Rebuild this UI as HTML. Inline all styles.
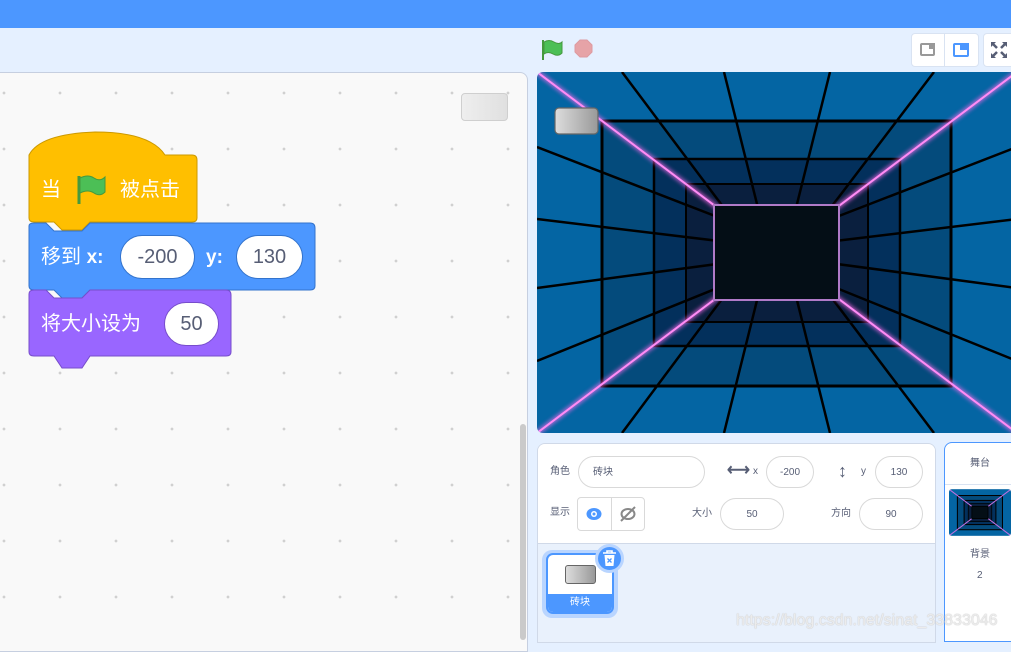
<!DOCTYPE html>
<html><head><meta charset="utf-8">
<style>
*{margin:0;padding:0;box-sizing:border-box}
body{width:1011px;height:640px;overflow:hidden;background:#e5f0ff;font-family:"Liberation Sans","Noto Sans CJK SC",sans-serif;position:relative}
.abs{position:absolute}
.top{left:0;top:0;width:1011px;height:28px;background:#4c97ff}
.code{left:-10px;top:72px;width:538px;height:580px;background-color:#f9f9f9;border:1px solid #c6cfe0;border-radius:0 8px 0 0;
background-image:radial-gradient(circle,#d0d0d0 1.2px,transparent 1.6px);background-size:56px 56px;background-position:-15px -8px}
.blk{color:#fff;font-size:20px;line-height:24px}
.pill{position:absolute;background:#fff;border-radius:22px;color:#575e75;font-size:20px;text-align:center;border:1px solid #3373cc}
.lab{font-size:10px;color:#575e75;position:absolute;line-height:10px}
.inp{position:absolute;border:1px solid #d9d9d9;border-radius:16px;background:#fff;font-size:10px;color:#575e75;text-align:center;line-height:12px;height:32px;padding-top:10px}
</style></head><body>
<div class="abs top"></div>
<div class="abs code"></div>
<div class="abs" style="left:520px;top:424px;width:6px;height:216px;background:#cacaca;border-radius:3px"></div>
<div class="abs" style="left:461px;top:93px;width:47px;height:28px;border:1px solid #cfcfcf;border-radius:4px;background:linear-gradient(90deg,#eee,#e0e0e0)"></div>

<!-- blocks -->
<svg class="abs" style="left:0;top:120px" width="330" height="260">
<path d="M29 35 Q40 14 95 12 Q150 12 165 35 L192 35 Q197 35 197 40 L197 98 Q197 102 192 102 L90 102 L82 110 L62 110 L54 102 L34 102 Q29 102 29 98 Z" fill="#ffbf00" stroke="#cc9900"/>
<path d="M29 106 Q29 103 34 103 L46 103 L54 111 L82 111 L90 103 L310 103 Q315 103 315 108 L315 166 Q315 170 310 170 L90 170 L82 178 L62 178 L54 170 L34 170 Q29 170 29 166 Z" fill="#4c97ff" stroke="#3373cc"/>
<path d="M29 174 Q29 170 34 170 L46 170 L54 178 L82 178 L90 170 L226 170 Q231 170 231 175 L231 232 Q231 236 226 236 L90 236 L82 248 L62 248 L54 236 L34 236 Q29 236 29 232 Z" fill="#9966ff" stroke="#774dcb"/>
<path d="M79 56 L79 84" stroke="#45993d" stroke-width="3"/>
<path d="M80 58 Q88 54 94 58 Q100 62 105 57 L105 72 Q100 77 94 73 Q88 69 80 73 Z" fill="#4cbf56" stroke="#45993d"/>
</svg>
<div class="abs blk" style="left:41px;top:178px">当</div>
<div class="abs blk" style="left:120px;top:178px">被点击</div>
<div class="abs blk" style="left:41px;top:245px">移到 <b style="font-size:19px">x:</b></div>
<div class="pill" style="left:120px;top:235px;width:75px;height:44px;line-height:42px">-200</div>
<div class="abs blk" style="left:206px;top:245px"><b style="font-size:19px">y:</b></div>
<div class="pill" style="left:236px;top:235px;width:67px;height:44px;line-height:42px">130</div>
<div class="abs blk" style="left:41px;top:312px">将大小设为</div>
<div class="pill" style="left:164px;top:302px;width:55px;height:44px;line-height:42px;border-color:#774dcb">50</div>

<!-- stage header -->
<svg class="abs" style="left:540px;top:38px" width="60" height="24">
<path d="M3 2 L3 22" stroke="#45993d" stroke-width="2"/>
<path d="M4 4 Q9 1 14 4 Q19 7 22 4 L22 15 Q18 19 13 16 Q8 13 4 16 Z" fill="#4cbf56" stroke="#45993d"/>
<polygon points="40,2 47,2 52,7 52,14 47,19 40,19 35,14 35,7" fill="#e6a3a7" stroke="#dd9aa0"/>
</svg>
<div class="abs" style="left:911px;top:33px;width:68px;height:34px;background:#fff;border:1px solid #d9e3f2;border-radius:4px"></div>
<div class="abs" style="left:944px;top:33px;width:1px;height:34px;background:#d9e3f2"></div>
<div class="abs" style="left:920px;top:43px;width:15px;height:13px;border:2px solid #999;border-radius:2px"></div>
<div class="abs" style="left:929px;top:43px;width:6px;height:6px;background:#999"></div>
<div class="abs" style="left:953px;top:43px;width:16px;height:14px;border:2px solid #4c97ff;border-radius:2px"></div>
<div class="abs" style="left:960px;top:43px;width:9px;height:7px;background:#4c97ff"></div>
<div class="abs" style="left:983px;top:33px;width:40px;height:34px;background:#fff;border:1px solid #d9e3f2;border-radius:4px"></div>
<svg class="abs" style="left:990px;top:41px" width="18" height="18"><g stroke="#575e75" stroke-width="2.5" fill="none"><path d="M2 2 L7 7 M2 16 L7 11 M16 2 L11 7 M16 16 L11 11"/></g><g fill="#575e75"><path d="M1 1 L6 1 L1 6Z M17 1 L12 1 L17 6Z M1 17 L6 17 L1 12Z M17 17 L12 17 L17 12Z"/></g></svg>

<!-- stage -->
<svg class="abs" style="left:537px;top:72px;border-radius:6px 0 0 6px" width="474" height="361" viewBox="0 0 474 361">
<defs><filter id="g"><feGaussianBlur stdDeviation="2"/></filter>
<linearGradient id="br"><stop offset="0" stop-color="#ddd"/><stop offset="1" stop-color="#999"/></linearGradient></defs>
<rect width="480" height="361" fill="#0465a3"/>
<rect x="65" y="49" width="349" height="265" fill="#044b7c"/>
<rect x="117" y="87" width="246" height="187" fill="#03305c"/>
<rect x="149" y="112" width="182" height="138" fill="#0a1f3e"/>
<g stroke="#000" stroke-width="2.5">
<line x1="85" y1="0" x2="220" y2="180"/><line x1="187" y1="0" x2="232" y2="180"/><line x1="293" y1="0" x2="248" y2="180"/><line x1="397" y1="0" x2="260" y2="180"/>
<line x1="85" y1="361" x2="220" y2="180"/><line x1="187" y1="361" x2="232" y2="180"/><line x1="293" y1="361" x2="248" y2="180"/><line x1="397" y1="361" x2="260" y2="180"/>
<line x1="0" y1="75" x2="240" y2="168"/><line x1="0" y1="147" x2="240" y2="176"/><line x1="0" y1="216" x2="240" y2="184"/><line x1="0" y1="289" x2="240" y2="192"/>
<line x1="480" y1="75" x2="240" y2="168"/><line x1="480" y1="147" x2="240" y2="176"/><line x1="480" y1="216" x2="240" y2="184"/><line x1="480" y1="289" x2="240" y2="192"/>
</g>
<g fill="none" stroke="#000" stroke-width="3">
<rect x="65" y="49" width="349" height="265"/>
<rect x="117" y="87" width="246" height="187" stroke-width="2.5"/>
<rect x="149" y="112" width="182" height="138" stroke-width="2"/>
</g>
<g stroke="#ff6cf0" stroke-width="4" filter="url(#g)" opacity="0.8"><line x1="0" y1="0" x2="480" y2="361"/><line x1="480" y1="0" x2="0" y2="361"/></g>
<g stroke="#ff8cf5" stroke-width="2"><line x1="0" y1="0" x2="480" y2="361"/><line x1="480" y1="0" x2="0" y2="361"/></g>
<rect x="177" y="133" width="125" height="95" fill="#040e16" stroke="#b07ac8" stroke-width="2"/>
<rect x="18" y="36" width="43" height="26" rx="4" fill="url(#br)" stroke="#666" stroke-width="1.2"/>
</svg>

<!-- sprite info -->
<div class="abs" style="left:537px;top:443px;width:399px;height:200px;background:#e9f1fc;border:1px solid #d0d9e8;border-radius:8px 8px 0 0;overflow:hidden">
<div style="height:100px;background:#fff;border-bottom:1px solid #d0d9e8"></div>
</div>
<div class="lab" style="left:550px;top:467px">角色</div>
<div class="inp" style="left:578px;top:456px;width:127px;text-align:left;padding-left:14px">砖块</div>
<div class="abs" style="left:727px;top:461px;font-size:16px;line-height:20px;color:#575e75;font-weight:bold">⟷</div>
<div class="lab" style="left:753px;top:467px">x</div>
<div class="inp" style="left:766px;top:456px;width:48px">-200</div>
<div class="abs" style="left:838px;top:461px;font-size:18px;line-height:20px;color:#575e75;font-weight:bold">↕</div>
<div class="lab" style="left:861px;top:467px">y</div>
<div class="inp" style="left:875px;top:456px;width:48px">130</div>
<div class="lab" style="left:550px;top:508px">显示</div>
<div class="abs" style="left:577px;top:497px;width:68px;height:34px;border:1px solid #d9d9d9;border-radius:4px;background:#fff"></div>
<div class="abs" style="left:611px;top:497px;width:1px;height:34px;background:#d9d9d9"></div>
<svg class="abs" style="left:585px;top:505px" width="56" height="18"><ellipse cx="9" cy="9" rx="7.5" ry="6" fill="#4c97ff"/><circle cx="9" cy="9" r="3" fill="#fff"/><circle cx="9" cy="9" r="1.5" fill="#4c97ff"/><ellipse cx="43" cy="9" rx="6.5" ry="5" fill="none" stroke="#888" stroke-width="2"/><line x1="36" y1="16" x2="50" y2="2" stroke="#888" stroke-width="2"/></svg>
<div class="lab" style="left:692px;top:509px">大小</div>
<div class="inp" style="left:720px;top:498px;width:64px">50</div>
<div class="lab" style="left:831px;top:509px">方向</div>
<div class="inp" style="left:859px;top:498px;width:64px">90</div>

<div class="abs" style="left:542px;top:550px;width:76px;height:68px;border-radius:10px;background:#b9d5ff"></div>
<div class="abs" style="left:546px;top:553px;width:68px;height:61px;border:2px solid #4c97ff;border-radius:7px;background:#fff;overflow:hidden">
<div style="position:absolute;left:17px;top:10px;width:31px;height:19px;border:1px solid #666;border-radius:3px;background:linear-gradient(90deg,#ddd,#999)"></div>
<div style="position:absolute;left:0;bottom:0;width:100%;height:18px;background:#4c97ff;color:#fff;font-size:10px;text-align:center;line-height:18px">砖块</div>
</div>
<div class="abs" style="left:595px;top:544px;width:29px;height:29px;border-radius:50%;background:#4c97ff;border:3px solid #b9d5ff"></div>
<svg class="abs" style="left:601px;top:549px" width="17" height="19"><path d="M2 4 H15 M6 4 V2 H11 V4" stroke="#fff" stroke-width="1.6" fill="none"/><path d="M3.5 6 H13.5 L12.5 17 H4.5 Z" fill="#fff"/><path d="M6.5 9.5 L10.5 13.5 M10.5 9.5 L6.5 13.5" stroke="#4c97ff" stroke-width="1.3"/></svg>

<!-- stage panel -->
<div class="abs" style="left:944px;top:442px;width:80px;height:200px;background:#fff;border:1px solid #4c97ff;border-radius:8px 0 0 0"></div>
<div class="abs" style="left:945px;top:484px;width:70px;height:1px;background:#d9e3f2"></div>
<div class="abs lab" style="left:970px;top:459px">舞台</div>
<svg class="abs" style="left:949px;top:489px;border-radius:3px" width="62" height="47" viewBox="0 0 480 361"><rect width="480" height="361" fill="#0465a3"/><rect x="65" y="49" width="349" height="265" fill="#044b7c" stroke="#000" stroke-width="8"/><rect x="117" y="87" width="246" height="187" fill="#03305c" stroke="#000" stroke-width="8"/><rect x="149" y="112" width="182" height="138" fill="#0a1f3e" stroke="#000" stroke-width="6"/><g stroke="#c070e0" stroke-width="8"><line x1="0" y1="0" x2="480" y2="361"/><line x1="480" y1="0" x2="0" y2="361"/></g><rect x="177" y="133" width="125" height="95" fill="#040e16" stroke="#000" stroke-width="6"/></svg>
<div class="abs lab" style="left:970px;top:550px">背景</div>
<div class="abs lab" style="left:977px;top:571px">2</div>

<div class="abs" style="left:736px;top:612px;font-size:16px;line-height:18px;color:rgba(240,240,240,0.9);text-shadow:0 0 1px #c8c8c8,0 0 1px #c8c8c8;white-space:nowrap">https://blog.csdn.net/sinat_33833046</div>
</body></html>
